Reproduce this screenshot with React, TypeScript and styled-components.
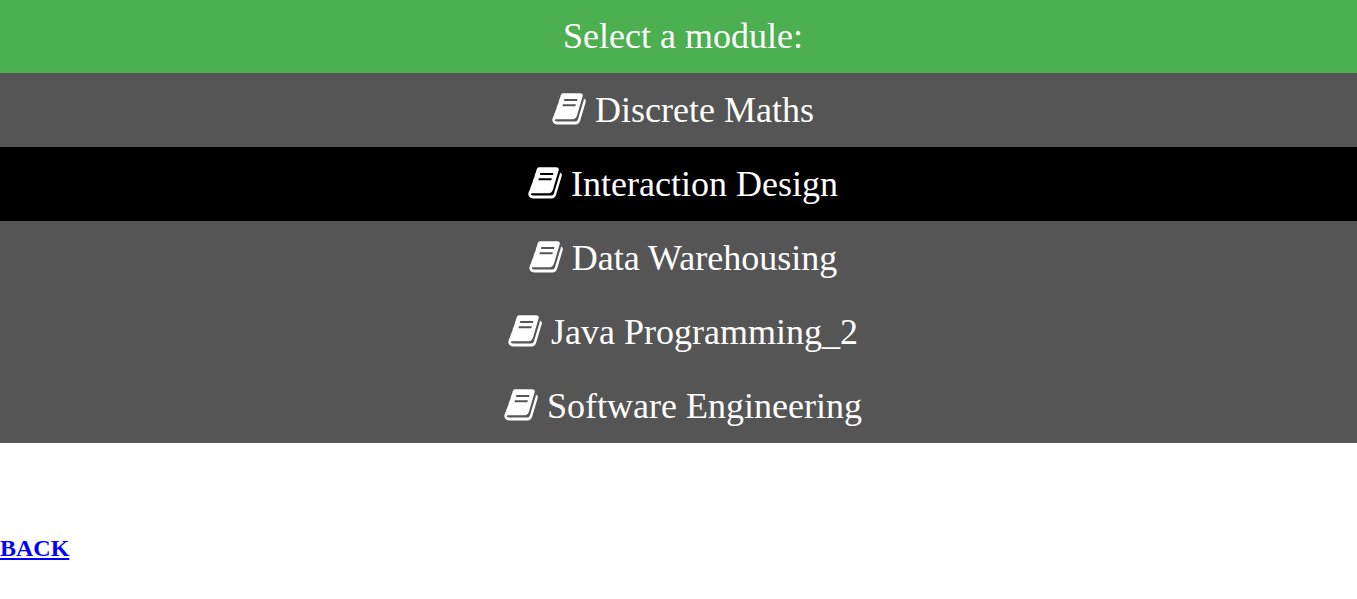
import React from "react";
import styled, { createGlobalStyle } from "styled-components";

const GlobalStyle = createGlobalStyle`
  body {
    margin: 0;
    background: #fff;
    font-family: "Liberation Serif", "Times New Roman", serif;
  }
`;

const IconBar = styled.nav`
  background: #555;
  text-align: center;
  color: #fff;
  font-size: 36px;
  line-height: 42px;
`;

const Heading = styled.div`
  background: #4caf50;
  padding: 15px 0 16px 9px;
`;

const ModuleLink = styled.a<{ $active?: boolean }>`
  display: flex;
  justify-content: center;
  align-items: flex-start;
  gap: 9px;
  padding: 16px 0 16px 9px;
  color: inherit;
  text-decoration: none;
  background: ${(p) => (p.$active ? "#000" : "transparent")};

  &:hover {
    background: #000;
  }
`;

const BookSvg = styled.svg`
  width: 34px;
  height: 40px;
  fill: currentColor;
`;

const Back = styled.h2`
  margin: 92px 0 20px;
  font-size: 24px;
  line-height: 27px;

  a {
    color: #0000ff;
  }
`;

const modules = [
  "Discrete Maths",
  "Interaction Design",
  "Data Warehousing",
  "Java Programming_2",
  "Software Engineering",
];

function BookIcon() {
  return (
    <BookSvg viewBox="0 0 34 40" aria-hidden="true">
      <path
        fillRule="evenodd"
        d="M11 4.200H28Q31.600 4.200 30.600 7.500L25 26.500Q24 30.200 20.500 30.200H4Q2.800 30.200 2.800 31.200Q3.200 32.400 5.500 32.400H23.500Q25.200 32.400 25.800 30.800L31.800 11Q32 10.300 31.900 9.500Q34.500 10.500 33.700 13L28.200 31.500Q27 35.500 23.500 35.500H5.500Q1.800 35.500 .5 32.200Q0 30.300 1 28.500Q2.400 25.800 2.800 23.500Q4.700 19.800 5 17.200Q6.900 13.600 7.100 11Q8.300 8.500 8.600 6.500Q9.400 4.200 11 4.200ZM12.400 10L11.900 12H24.900L25.500 10ZM10.900 15.200L10.400 17.200H23.300L23.900 15.200Z"
      />
    </BookSvg>
  );
}

export default function App() {
  return (
    <>
      <GlobalStyle />
      <IconBar aria-label="Modules">
        <Heading>Select a module:</Heading>
        {modules.map((name) => (
          <ModuleLink key={name} href="#" $active={name === "Interaction Design"}>
            <BookIcon />
            <span>{name}</span>
          </ModuleLink>
        ))}
      </IconBar>
      <Back>
        <a href="#">BACK</a>
      </Back>
    </>
  );
}
